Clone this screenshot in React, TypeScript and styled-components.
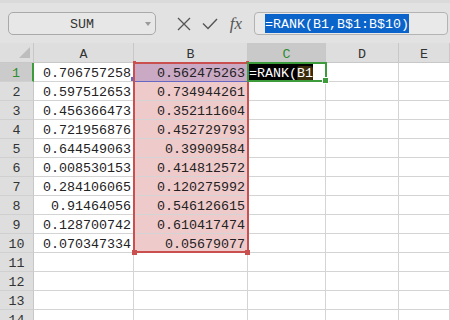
import React from "react";
import styled, { createGlobalStyle } from "styled-components";

const GlobalStyle = createGlobalStyle`
  html, body { margin: 0; padding: 0; background: #ffffff; overflow: hidden; }
  body { font-family: "Liberation Mono", "DejaVu Sans Mono", monospace; }
`;

const MONO = `"Liberation Mono", "DejaVu Sans Mono", monospace`;

const Page = styled.div`
  width: 450px;
  height: 320px;
  overflow: hidden;
  background: #ffffff;
`;

const Toolbar = styled.div`
  height: 43px;
  box-sizing: border-box;
  padding-top: 12px;
  display: flex;
  align-items: flex-start;
  background: #e2e2e2;
  border-top: 3px solid #dadada;
  padding-top: 9px;
`;

const NameBox = styled.div`
  position: relative;
  margin-left: 8px;
  width: 148px;
  height: 23px;
  box-sizing: border-box;
  border: 1px solid #a9a9a9;
  border-radius: 5px;
  background: #e7e7e7;
  display: flex;
  align-items: center;
  justify-content: center;
  font-family: ${MONO};
  font-size: 13.33px;
  color: #333;
  padding-top: 2px;
`;

const DropArrow = styled.span`
  position: absolute;
  right: 4px;
  top: 9px;
  width: 0;
  height: 0;
  border-left: 3px solid transparent;
  border-right: 3px solid transparent;
  border-top: 4px solid #9a9a9a;
`;

const IconGroup = styled.div`
  margin-left: 15px;
  display: flex;
  height: 23px;
`;

const IconButton = styled.div`
  width: 26px;
  height: 23px;
  display: flex;
  align-items: center;
  justify-content: center;
  color: #555;
`;

const FxLabel = styled.span`
  font-family: "Liberation Serif", "DejaVu Serif", serif;
  font-style: italic;
  font-size: 17px;
  color: #555;
  padding-top: 1px;
`;

const FormulaInput = styled.div`
  flex: 1;
  margin-left: 5px;
  margin-right: 2px;
  height: 23px;
  box-sizing: border-box;
  border: 1px solid #b3b3b3;
  border-radius: 4px;
  background: #e9e9e9;
  display: flex;
  align-items: center;
  padding-left: 10px;
`;

const FormulaText = styled.span`
  background: #0b64c9;
  color: #ffffff;
  font-family: ${MONO};
  font-size: 13.33px;
  height: 19px;
  line-height: 21px;
  white-space: pre;
`;

const Sheet = styled.div`
  display: grid;
  grid-template-columns: 34px 100px 114px 78px 73px 1fr;
  grid-template-rows: 20px;
  grid-auto-rows: 19px;
  font-family: ${MONO};
  font-size: 13.33px;
  color: #222;
`;

type Pos = { $row: number; $col: number };

const Corner = styled.div<Pos>`
  grid-row: ${(p) => p.$row};
  grid-column: ${(p) => p.$col};
  background: #dedede;
  border-right: 1px solid #c8c8c8;
  border-bottom: 1px solid #c8c8c8;
  box-sizing: border-box;
  display: flex;
  align-items: flex-end;
  justify-content: flex-end;
  padding: 0 3px 4px 0;
`;

const ColHeader = styled.div<Pos & { $active?: boolean }>`
  grid-row: ${(p) => p.$row};
  grid-column: ${(p) => p.$col};
  background: ${(p) => (p.$active ? "#c9c9c9" : "#dedede")};
  color: ${(p) => (p.$active ? "#2e8b2e" : "#333")};
  border-right: 1px solid #c8c8c8;
  border-bottom: 1px solid #c8c8c8;
  box-sizing: border-box;
  display: flex;
  align-items: center;
  justify-content: center;
  padding-top: 3px;
`;

const RowHeader = styled.div<Pos & { $active?: boolean }>`
  grid-row: ${(p) => p.$row};
  grid-column: ${(p) => p.$col};
  background: ${(p) => (p.$active ? "#cbcbcb" : "#dedede")};
  color: ${(p) => (p.$active ? "#2e8b2e" : "#333")};
  border-right: ${(p) => (p.$active ? "2px solid #3c9c3c" : "1px solid #c8c8c8")};
  border-bottom: 1px solid #d0d0d0;
  box-sizing: border-box;
  display: flex;
  align-items: center;
  justify-content: center;
  padding-top: 2px;
`;

const Cell = styled.div<Pos & { $fill?: string; $underline?: boolean }>`
  grid-row: ${(p) => p.$row};
  grid-column: ${(p) => p.$col};
  background: ${(p) => p.$fill || "#ffffff"};
  border-right: 1px solid #d4d4d4;
  border-bottom: 1px solid ${(p) => (p.$underline ? "#6767c4" : "#d4d4d4")};
  box-sizing: border-box;
  display: flex;
  align-items: center;
  justify-content: flex-end;
  padding: 2px 2px 0 0;
  white-space: nowrap;
  overflow: visible;
  position: relative;
`;

const EditCell = styled.div<Pos>`
  grid-row: ${(p) => p.$row};
  grid-column: ${(p) => p.$col};
  background: #ffffff;
  display: flex;
  align-items: center;
  padding-left: 1px;
  z-index: 4;
`;

const EditText = styled.span`
  background: #000000;
  color: #ffffff;
  height: 17px;
  line-height: 19px;
  white-space: pre;
`;

const RefMark = styled.span`
  background: #3b2b0d;
  border-radius: 3px;
`;

const Selection = styled.div<{ $col: number; $from: number; $span: number }>`
  grid-column: ${(p) => p.$col};
  grid-row: ${(p) => p.$from} / span ${(p) => p.$span};
  margin: -1px -1px 0 -1px;
  border: 2px solid #c9504e;
  position: relative;
  z-index: 2;
  pointer-events: none;
`;

const Handle = styled.span<{ $corner: "tl" | "tr" | "bl" | "br"; $size: number }>`
  position: absolute;
  width: ${(p) => p.$size}px;
  height: ${(p) => p.$size}px;
  background: #c9504e;
  ${(p) => (p.$corner[0] === "t" ? "top" : "bottom")}: -${(p) => Math.ceil(p.$size / 2) + 1}px;
  ${(p) => (p.$corner[1] === "l" ? "left" : "right")}: -${(p) => Math.ceil(p.$size / 2) + 0}px;
`;

const BlueTick = styled.span`
  position: absolute;
  left: -3px;
  top: 14px;
  width: 3px;
  height: 4px;
  background: #5d6ad0;
`;

const ActiveFrame = styled.div<Pos>`
  grid-row: ${(p) => p.$row};
  grid-column: ${(p) => p.$col};
  margin: -1px -1px 0 -1px;
  border: 2px solid #3c9c3c;
  position: relative;
  z-index: 5;
  pointer-events: none;
`;

const FillHandle = styled.span`
  position: absolute;
  right: -4px;
  bottom: -4px;
  width: 5px;
  height: 5px;
  background: #3c9c3c;
  border: 1px solid #ffffff;
`;

const data: [string, string][] = [
  ["0.706757258", "0.562475263"],
  ["0.597512653", "0.734944261"],
  ["0.456366473", "0.352111604"],
  ["0.721956876", "0.452729793"],
  ["0.644549063", "0.39909584"],
  ["0.008530153", "0.414812572"],
  ["0.284106065", "0.120275992"],
  ["0.91464056", "0.546126615"],
  ["0.128700742", "0.610417474"],
  ["0.070347334", "0.05679077"],
];

const columns = ["A", "B", "C", "D", "E"];

export default function App() {
  const rowCount = 14;
  const rows = Array.from({ length: rowCount }, (_, i) => i + 1);
  return (
    <Page>
      <GlobalStyle />
      <Toolbar>
        <NameBox>
          SUM
          <DropArrow />
        </NameBox>
        <IconGroup>
          <IconButton>
            <svg width="14" height="14" viewBox="0 0 14 14">
              <path d="M1 1 L13 13 M13 1 L1 13" stroke="#555" strokeWidth="1.3" fill="none" />
            </svg>
          </IconButton>
          <IconButton>
            <svg width="16" height="12" viewBox="0 0 16 12">
              <path d="M1 5.5 L6 10.5 L15 1" stroke="#555" strokeWidth="1.4" fill="none" />
            </svg>
          </IconButton>
          <IconButton>
            <FxLabel>fx</FxLabel>
          </IconButton>
        </IconGroup>
        <FormulaInput>
          <FormulaText>=RANK(B1,B$1:B$10)</FormulaText>
        </FormulaInput>
      </Toolbar>
      <Sheet>
        <Corner $row={1} $col={1}>
          <svg width="11" height="11" viewBox="0 0 11 11">
            <path d="M0 11 L11 0 L11 11 Z" fill="#bdbdbd" />
          </svg>
        </Corner>
        {columns.map((c, i) => (
          <ColHeader key={c} $row={1} $col={i + 2} $active={c === "C"}>
            {c}
          </ColHeader>
        ))}
        {rows.map((r) => {
          const gr = r + 1;
          const vals = data[r - 1];
          return (
            <React.Fragment key={r}>
              <RowHeader $row={gr} $col={1} $active={r === 1}>
                {r}
              </RowHeader>
              <Cell $row={gr} $col={2}>{vals ? vals[0] : ""}</Cell>
              <Cell
                $row={gr}
                $col={3}
                $fill={vals ? (r === 1 ? "#c9a9c4" : "#efcaca") : undefined}
                $underline={r === 1}
              >
                {vals ? vals[1] : ""}
                {r === 1 && <BlueTick />}
              </Cell>
              {r === 1 ? (
                <EditCell $row={gr} $col={4}>
                  <EditText>
                    =RANK(<RefMark>B1</RefMark>
                  </EditText>
                </EditCell>
              ) : (
                <Cell $row={gr} $col={4} />
              )}
              <Cell $row={gr} $col={5} />
              <Cell $row={gr} $col={6} />
            </React.Fragment>
          );
        })}
        <Selection $col={3} $from={2} $span={10}>
          <Handle $corner="tl" $size={3} />
          <Handle $corner="tr" $size={3} />
          <Handle $corner="bl" $size={5} />
          <Handle $corner="br" $size={5} />
        </Selection>
        <ActiveFrame $row={2} $col={4}>
          <FillHandle />
        </ActiveFrame>
      </Sheet>
    </Page>
  );
}
